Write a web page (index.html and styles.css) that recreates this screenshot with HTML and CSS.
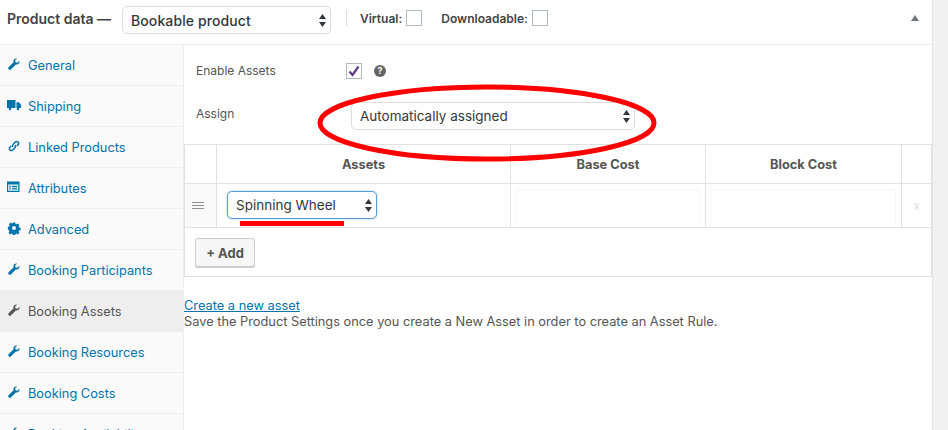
FILE: index.html
```html
<!DOCTYPE html>
<html lang="en">
<head>
    <meta charset="UTF-8">
    <title>Product data</title>
    <link rel="stylesheet" href="styles.css">
</head>
<body>
    <svg class="icon-defs" width="0" height="0">
        <symbol id="i-wrench" viewBox="-1 -1 16 16">
            <path d="M13.2 3.4c.3 1.2 0 2.500-.9 3.300-.9.900-2.100 1.100-3.200.8L3.400 13.200c-.6.600-1.600.600-2.200 0l-.4-.4c-.6-.6-.6-1.600 0-2.200l5.700-5.700c-.3-1.100-.1-2.300.8-3.200.8-.9 2.100-1.200 3.300-.9L8.300 3.100l.5 2.100 2.100.5z"/>
        </symbol>
        <symbol id="i-truck" viewBox="0 -1 14 14">
            <path d="M0 1h8.500v8H0zM9.500 3.200H12l2 2.500V9H9.500z"/>
            <circle cx="3" cy="10" r="1.300"/><circle cx="11" cy="10" r="1.300"/>
        </symbol>
        <symbol id="i-link" viewBox="-1 -1 16 16">
            <path fill="none" stroke="currentColor" stroke-width="1.700" d="M6 8.200c-1-1-1-2.300 0-3.200l2.400-2.500c1-1 2.300-1 3.200 0s1 2.300 0 3.200L10.300 7M8 5.800c1 1 1 2.300 0 3.200l-2.400 2.500c-1 1-2.300 1-3.200 0s-1-2.300 0-3.200L3.700 7"/>
        </symbol>
        <symbol id="i-card" viewBox="0 -1 14 14">
            <path fill-rule="evenodd" d="M0 .5h12.500v10.500H0zM1.200 3.500v6.300h10V3.500zM2.200 4.800h1.600v1.400H2.200zM2.200 7.200h1.600v1.400H2.200zM5 4.800h5.200v1.400H5zM5 7.200h5.200v1.400H5z"/>
        </symbol>
        <symbol id="i-gear" viewBox="-1 -1 16 16">
            <path fill-rule="evenodd" d="M5.600.6h2.800l.3 1.700 1.200.5 1.400-1 2 2-1 1.400.5 1.200 1.700.3v2.800l-1.700.3-.5 1.200 1 1.400-2 2-1.400-1-1.200.5-.3 1.700H5.600l-.3-1.700-1.200-.5-1.400 1-2-2 1-1.400-.5-1.200L0 8.500V5.700l1.700-.3.500-1.200-1-1.400 2-2 1.400 1 1.200-.5zM7 4.800a2.300 2.300 0 1 0 0 4.600 2.300 2.300 0 0 0 0-4.600z"/>
        </symbol>
        <symbol id="i-arrows" viewBox="0 0 7 13">
            <path d="M3.500 0 7 5H0zM3.500 13 0 8h7z"/>
        </symbol>
    </svg>

    <div class="panel">
        <header class="panel-head">
            <span class="panel-title">Product data —</span>
            <div class="select select-type">
                <span>Bookable product</span>
                <svg class="arrows"><use href="#i-arrows"/></svg>
            </div>
            <span class="head-sep"></span>
            <label class="head-check">Virtual: <span class="checkbox"></span></label>
            <label class="head-check">Downloadable: <span class="checkbox"></span></label>
            <span class="collapse"></span>
        </header>

        <div class="panel-body">
            <nav class="tabs">
                <a class="tab"><svg class="tab-icon"><use href="#i-wrench"/></svg>General</a>
                <a class="tab"><svg class="tab-icon"><use href="#i-truck"/></svg>Shipping</a>
                <a class="tab"><svg class="tab-icon"><use href="#i-link"/></svg>Linked Products</a>
                <a class="tab"><svg class="tab-icon"><use href="#i-card"/></svg>Attributes</a>
                <a class="tab"><svg class="tab-icon"><use href="#i-gear"/></svg>Advanced</a>
                <a class="tab"><svg class="tab-icon"><use href="#i-wrench"/></svg>Booking Participants</a>
                <a class="tab active"><svg class="tab-icon"><use href="#i-wrench"/></svg>Booking Assets</a>
                <a class="tab"><svg class="tab-icon"><use href="#i-wrench"/></svg>Booking Resources</a>
                <a class="tab"><svg class="tab-icon"><use href="#i-wrench"/></svg>Booking Costs</a>
                <a class="tab"><svg class="tab-icon"><use href="#i-wrench"/></svg>Booking Availability</a>
            </nav>

            <main class="content">
                <div class="field field-enable">
                    <span class="field-label">Enable Assets</span>
                    <span class="checkbox checked">
                        <svg viewBox="0 0 14 14"><path d="M2.500 7.500 5.500 11 11.500 2.500" fill="none" stroke="#5b3a86" stroke-width="2.200"/></svg>
                    </span>
                    <span class="help">?</span>
                </div>
                <div class="field field-assign">
                    <span class="field-label">Assign</span>
                    <div class="select select-assign">
                        <span>Automatically assigned</span>
                        <svg class="arrows"><use href="#i-arrows"/></svg>
                    </div>
                </div>

                <div class="rules">
                    <div class="rules-row rules-head">
                        <div class="cell"></div>
                        <div class="cell">Assets</div>
                        <div class="cell">Base Cost</div>
                        <div class="cell">Block Cost</div>
                        <div class="cell"></div>
                    </div>
                    <div class="rules-row rules-line">
                        <div class="cell cell-drag"><span class="drag"></span></div>
                        <div class="cell cell-asset">
                            <div class="select select-asset">
                                <span>Spinning Wheel</span>
                                <svg class="arrows"><use href="#i-arrows"/></svg>
                            </div>
                        </div>
                        <div class="cell cell-input"><div class="input"></div></div>
                        <div class="cell cell-input"><div class="input"></div></div>
                        <div class="cell cell-remove">x</div>
                    </div>
                    <div class="rules-foot">
                        <button class="add-btn">+ Add</button>
                    </div>
                </div>

                <p class="note">
                    <a href="#">Create a new asset</a><br>
                    Save the Product Settings once you create a New Asset in order to create an Asset Rule.
                </p>
            </main>
        </div>
    </div>

    <!-- red annotations drawn on top of the screenshot -->
    <svg class="mark-ellipse" width="348" height="86" viewBox="0 0 348 86">
        <ellipse cx="174" cy="43" rx="167" ry="36" fill="none" stroke="#ff0000" stroke-width="5"/>
    </svg>
    <span class="mark-line"></span>
</body>
</html>
```

FILE: styles.css
```css
* {
    margin: 0;
    padding: 0;
    box-sizing: border-box;
}

html, body {
    height: 430px;
    overflow: hidden;
}

body {
    font-family: Inter, "Liberation Sans", sans-serif;
    font-size: 12.800px;
    color: #555;
    background: #f1f1f1;
    position: relative;
}

.icon-defs {
    position: absolute;
}

.panel {
    width: 933px;
    height: 430px;
    background: white;
    border-right: 1px solid #e5e5e5;
    display: flex;
    flex-direction: column;
}

.panel-head {
    height: 45px;
    flex: none;
    border-bottom: 1px solid #eee;
    display: flex;
    align-items: center;
    padding: 0 0 4px 7px;
    color: #444;
}

.panel-title {
    font-size: 14px;
    font-weight: 600;
    width: 115px;
    flex: none;
    margin-bottom: 4px;
}

.select {
    display: flex;
    align-items: center;
    justify-content: space-between;
    height: 28px;
    background: white;
    border: 1px solid #ddd;
    border-radius: 5px;
    font-size: 13.500px;
    color: #32373c;
    padding: 0 4px 0 8px;
}

.arrows {
    width: 7px;
    height: 13px;
    fill: #32373c;
}

.select-type {
    width: 209px;
    font-size: 14px;
    font-weight: 500;
    letter-spacing: 0.1px;
}

.head-sep {
    width: 1px;
    height: 16px;
    background: #ddd;
    margin: 0 13px 4px 15px;
}

.head-check {
    display: flex;
    align-items: center;
    gap: 4px;
    font-size: 12px;
    font-weight: 600;
    margin: 0 19px 4px 0;
}

.checkbox {
    display: block;
    width: 16px;
    height: 16px;
    border: 1px solid #b4b9be;
    background: white;
    flex: none;
}

.collapse {
    margin: 0 13px 4px auto;
    border-left: 4px solid transparent;
    border-right: 4px solid transparent;
    border-bottom: 6px solid #72777c;
}

.panel-body {
    flex: 1;
    display: flex;
    min-height: 0;
}

.tabs {
    width: 184px;
    flex: none;
    background: #fafafa;
    border-right: 1px solid #eee;
    overflow: hidden;
}

.tab {
    display: flex;
    align-items: center;
    height: 41px;
    padding-left: 7px;
    border-bottom: 1px solid #eee;
    color: #0073aa;
    font-size: 12.800px;
}

.tab.active {
    background: #eee;
    color: #555;
}

.tab-icon {
    width: 14px;
    height: 14px;
    margin-right: 7px;
    margin-top: -3px;
    fill: currentColor;
    flex: none;
}

.content {
    flex: 1;
    min-width: 0;
}

.field {
    display: flex;
    align-items: center;
    padding-left: 12px;
    font-size: 12px;
}

.field-label {
    width: 150px;
    flex: none;
}

.field-enable {
    height: 52px;
    padding-bottom: 1px;
}

.help {
    width: 12px;
    height: 12px;
    margin-left: 12px;
    border-radius: 50%;
    background: #666;
    color: white;
    font-size: 9px;
    font-weight: 700;
    line-height: 12px;
    text-align: center;
}

.field-assign {
    height: 47px;
    align-items: flex-start;
    padding-top: 5px;
}

.field-assign .field-label {
    width: 155px;
    padding-top: 4px;
}

.select-assign {
    width: 284px;
}

.rules {
    border: 1px solid #e1e1e1;
}

.rules-row {
    display: grid;
    grid-template-columns: 31px 294px 195px 196px 1fr;
    border-bottom: 1px solid #e1e1e1;
}

.rules-head {
    height: 39px;
}

.rules-line {
    height: 44px;
}

.cell {
    border-left: 1px solid #e1e1e1;
    display: flex;
    align-items: center;
    justify-content: center;
}

.cell:first-child {
    border-left: none;
}

.rules-head .cell {
    font-weight: 700;
    font-size: 12.800px;
}

.cell-drag {
    background: #f9f9f9;
    padding-right: 6px;
}

.drag {
    width: 12px;
    height: 7px;
    border-top: 1px solid #8f8f8f;
    border-bottom: 1px solid #8f8f8f;
    position: relative;
}

.drag::after {
    content: "";
    position: absolute;
    left: 0;
    right: 0;
    top: 2px;
    height: 1px;
    background: #8f8f8f;
}

.cell-asset {
    justify-content: flex-start;
    padding: 0 0 1px 10px;
}

.select-asset {
    width: 150px;
    border-color: #5b9dd9;
    box-shadow: 0 0 2px rgba(30, 140, 190, 0.5);
}

.cell-input {
    align-items: flex-start;
    padding: 5px 5px 0;
}

.input {
    width: 100%;
    height: 33px;
    border: 1px solid #f6f6f6;
    border-bottom: none;
}

.cell-remove {
    color: #ddd;
    font-size: 12px;
}

.rules-foot {
    height: 48px;
    padding: 10px;
}

.add-btn {
    display: block;
    width: 60px;
    height: 29px;
    font-family: inherit;
    font-size: 13px;
    font-weight: 700;
    color: #555;
    background: #f7f7f7;
    border: 1px solid #ccc;
    border-radius: 3px;
    box-shadow: 0 1px 0 #ccc;
}

.note {
    margin-top: 21px;
    font-size: 12.800px;
    line-height: 16px;
}

.note a {
    color: #0073aa;
}

.mark-ellipse {
    position: absolute;
    left: 313px;
    top: 80px;
}

.mark-line {
    position: absolute;
    left: 240px;
    top: 221px;
    width: 104px;
    height: 5px;
    background: #ff0000;
}
```
